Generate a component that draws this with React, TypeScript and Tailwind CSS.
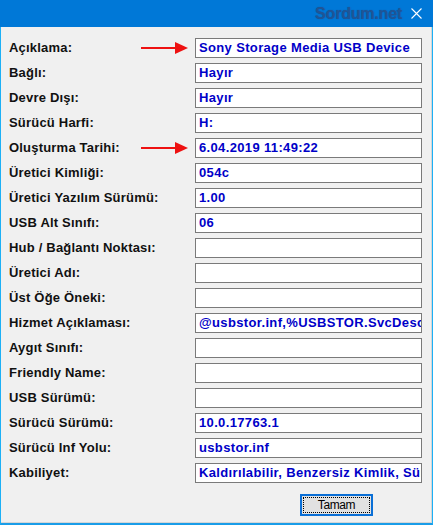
import React from 'react';

const rows: { label: string; value: string; arrow?: boolean }[] = [
  { label: 'Açıklama:', value: 'Sony Storage Media USB Device', arrow: true },
  { label: 'Bağlı:', value: 'Hayır' },
  { label: 'Devre Dışı:', value: 'Hayır' },
  { label: 'Sürücü Harfi:', value: 'H:' },
  { label: 'Oluşturma Tarihi:', value: '6.04.2019 11:49:22', arrow: true },
  { label: 'Üretici Kimliği:', value: '054c' },
  { label: 'Üretici Yazılım Sürümü:', value: '1.00' },
  { label: 'USB Alt Sınıfı:', value: '06' },
  { label: 'Hub / Bağlantı Noktası:', value: '' },
  { label: 'Üretici Adı:', value: '' },
  { label: 'Üst Öğe Öneki:', value: '' },
  { label: 'Hizmet Açıklaması:', value: '@usbstor.inf,%USBSTOR.SvcDesc%;USB Mass Storage Driver' },
  { label: 'Aygıt Sınıfı:', value: '' },
  { label: 'Friendly Name:', value: '' },
  { label: 'USB Sürümü:', value: '' },
  { label: 'Sürücü Sürümü:', value: '10.0.17763.1' },
  { label: 'Sürücü Inf Yolu:', value: 'usbstor.inf' },
  { label: 'Kabiliyet:', value: 'Kaldırılabilir, Benzersiz Kimlik, Sürpriz Kaldırma' },
];

const Arrow = () => (
  <svg width="48" height="14" viewBox="0 0 48 14" className="absolute left-[132px] top-[3px]">
    <rect x="0" y="6" width="36" height="2" fill="#ee1111" />
    <polygon points="34,1 47,7 34,13" fill="#ee1111" />
  </svg>
);

export default function App() {
  return (
    <div
      className="w-[433px] h-[525px] flex flex-col bg-[#f0f0f0]"
      style={{ fontFamily: '"Liberation Sans", Arial, sans-serif' }}
    >
      {/* Title bar */}
      <div className="h-[27px] bg-[#0078d7] flex items-center justify-end pr-[11px] shrink-0">
        <span
          className="text-[16px] font-bold text-[#1f5596] mr-[9px] tracking-[-0.2px]"
          style={{ textShadow: '0 0 1px rgba(20,70,140,0.8)' }}
        >
          Sordum.net
        </span>
        <svg width="11" height="11" viewBox="0 0 11 11">
          <path d="M0.5 0.5 L10.5 10.5 M10.5 0.5 L0.5 10.5" stroke="#ffffff" strokeWidth="1.1" />
        </svg>
      </div>

      {/* Body */}
      <div className="flex-1 flex flex-col border-l border-r border-b-2 border-l-[#1cb0f6] border-r-[#1cb0f6] border-b-[#1a9de8]">
        <div className="flex-1 flex flex-col border-r border-b border-[#d6d6d6] pl-[8px] pt-[11px]">
          <div className="flex flex-col gap-[5px]">
            {rows.map((r) => (
              <div key={r.label} className="relative flex items-center h-[20px]">
                <div className="w-[186px] text-[13px] font-bold text-[#111] tracking-[0.2px] whitespace-nowrap">
                  {r.label}
                </div>
                {r.arrow && <Arrow />}
                <div className="w-[227px] h-[20px] bg-white border border-[#7a7a7a] pl-[3px] flex items-center overflow-hidden">
                  <span className="text-[13px] font-bold text-[#0000c8] tracking-[0.35px] whitespace-nowrap">
                    {r.value}
                  </span>
                </div>
              </div>
            ))}
          </div>
          <div className="flex justify-start pl-[291px] mt-[11px]">
            <div className="w-[73px] h-[22px] border-2 border-[#0a6fd6] bg-[#e1e1e1] p-[1px]">
              <div className="w-full h-full border border-dotted border-black flex items-center justify-center">
                <span className="text-[12px] text-black tracking-[-0.4px]">Tamam</span>
              </div>
            </div>
          </div>
        </div>
      </div>
    </div>
  );
}
